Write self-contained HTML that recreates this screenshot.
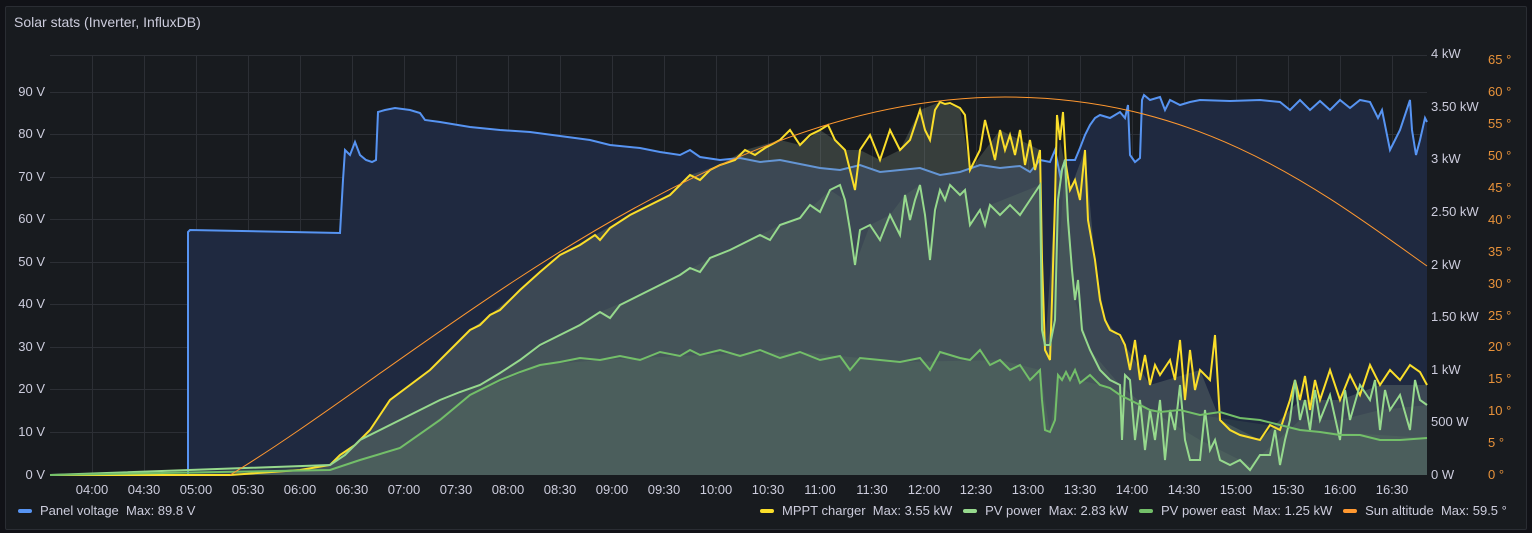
<!DOCTYPE html>
<html><head><meta charset="utf-8"><style>
html,body{margin:0;padding:0;background:#111217;width:1532px;height:533px;overflow:hidden;font-family:"Liberation Sans",sans-serif;}
.panel{position:absolute;left:5px;top:6px;width:1520px;height:522px;background:#181b1f;border:1px solid #2a2d33;border-radius:2px;}
.t{position:absolute;font-size:13px;color:#ccccdc;white-space:nowrap;}
.l{position:absolute;font-size:13px;color:#ccccdc;white-space:nowrap;right:1487px;text-align:right;}
.x{position:absolute;font-size:13px;color:#ccccdc;white-space:nowrap;width:60px;text-align:center;margin-left:-30px;}
.o{color:#e8923a;}
.title{position:absolute;left:14px;top:14px;font-size:14px;color:#ccccdc;}
.sw{display:inline-block;width:14px;height:4px;border-radius:2px;vertical-align:middle;margin-right:8px;position:relative;top:-1px}
</style></head><body>
<div class="panel"></div>
<div class="title">Solar stats (Inverter, InfluxDB)</div>
<svg width="1532" height="533" style="position:absolute;left:0;top:0">
<g stroke="#2c2f35" stroke-width="1">
<line x1="50" y1="55.5" x2="1427" y2="55.5"/>
<line x1="50" y1="92.5" x2="1427" y2="92.5"/><line x1="50" y1="134.5" x2="1427" y2="134.5"/><line x1="50" y1="177.5" x2="1427" y2="177.5"/><line x1="50" y1="219.5" x2="1427" y2="219.5"/><line x1="50" y1="262.5" x2="1427" y2="262.5"/><line x1="50" y1="304.5" x2="1427" y2="304.5"/><line x1="50" y1="347.5" x2="1427" y2="347.5"/><line x1="50" y1="389.5" x2="1427" y2="389.5"/><line x1="50" y1="432.5" x2="1427" y2="432.5"/>
<line x1="92.5" y1="55" x2="92.5" y2="475"/><line x1="144.5" y1="55" x2="144.5" y2="475"/><line x1="196.5" y1="55" x2="196.5" y2="475"/><line x1="248.5" y1="55" x2="248.5" y2="475"/><line x1="300.5" y1="55" x2="300.5" y2="475"/><line x1="352.5" y1="55" x2="352.5" y2="475"/><line x1="404.5" y1="55" x2="404.5" y2="475"/><line x1="456.5" y1="55" x2="456.5" y2="475"/><line x1="508.5" y1="55" x2="508.5" y2="475"/><line x1="560.5" y1="55" x2="560.5" y2="475"/><line x1="612.5" y1="55" x2="612.5" y2="475"/><line x1="664.5" y1="55" x2="664.5" y2="475"/><line x1="716.5" y1="55" x2="716.5" y2="475"/><line x1="768.5" y1="55" x2="768.5" y2="475"/><line x1="820.5" y1="55" x2="820.5" y2="475"/><line x1="872.5" y1="55" x2="872.5" y2="475"/><line x1="924.5" y1="55" x2="924.5" y2="475"/><line x1="976.5" y1="55" x2="976.5" y2="475"/><line x1="1028.5" y1="55" x2="1028.5" y2="475"/><line x1="1080.5" y1="55" x2="1080.5" y2="475"/><line x1="1132.5" y1="55" x2="1132.5" y2="475"/><line x1="1184.5" y1="55" x2="1184.5" y2="475"/><line x1="1236.5" y1="55" x2="1236.5" y2="475"/><line x1="1288.5" y1="55" x2="1288.5" y2="475"/><line x1="1340.5" y1="55" x2="1340.5" y2="475"/><line x1="1392.5" y1="55" x2="1392.5" y2="475"/>
</g>
<!-- blue -->
<path d="M50,475 L188,475 L188,232 L190,230 L340,233 L343,180 L345,150 L350,155 L355,142 L360,155 L366,160 L372,162 L376,160 L378,112 L385,110 L395,108 L410,110 L420,113 L425,120 L440,122 L470,127 L500,130 L530,132 L560,136 L590,140 L610,145 L640,148 L660,152 L680,155 L690,150 L700,157 L720,160 L740,158 L760,162 L780,160 L800,164 L820,168 L840,170 L860,165 L880,172 L900,170 L920,168 L940,175 L960,172 L980,165 L1000,168 L1020,166 L1030,172 L1040,160 L1050,162 L1055,150 L1060,175 L1065,160 L1075,160 L1080,148 L1085,135 L1090,125 L1095,118 L1100,115 L1110,118 L1120,112 L1125,118 L1128,105 L1130,155 L1135,162 L1140,158 L1142,100 L1144,95 L1150,100 L1160,97 L1165,110 L1170,100 L1180,105 L1190,102 L1200,100 L1230,101 L1260,100 L1280,102 L1290,110 L1300,100 L1310,110 L1320,101 L1330,110 L1340,100 L1350,108 L1360,100 L1370,102 L1378,118 L1382,110 L1390,150 L1395,140 L1400,130 L1410,100 L1412,130 L1416,155 L1420,140 L1425,118 L1427,122 L1427,475 Z" fill="#1f2940" stroke="none"/>
<path d="M50,475 L188,475 L188,232 L190,230 L340,233 L343,180 L345,150 L350,155 L355,142 L360,155 L366,160 L372,162 L376,160 L378,112 L385,110 L395,108 L410,110 L420,113 L425,120 L440,122 L470,127 L500,130 L530,132 L560,136 L590,140 L610,145 L640,148 L660,152 L680,155 L690,150 L700,157 L720,160 L740,158 L760,162 L780,160 L800,164 L820,168 L840,170 L860,165 L880,172 L900,170 L920,168 L940,175 L960,172 L980,165 L1000,168 L1020,166 L1030,172 L1040,160 L1050,162 L1055,150 L1060,175 L1065,160 L1075,160 L1080,148 L1085,135 L1090,125 L1095,118 L1100,115 L1110,118 L1120,112 L1125,118 L1128,105 L1130,155 L1135,162 L1140,158 L1142,100 L1144,95 L1150,100 L1160,97 L1165,110 L1170,100 L1180,105 L1190,102 L1200,100 L1230,101 L1260,100 L1280,102 L1290,110 L1300,100 L1310,110 L1320,101 L1330,110 L1340,100 L1350,108 L1360,100 L1370,102 L1378,118 L1382,110 L1390,150 L1395,140 L1400,130 L1410,100 L1412,130 L1416,155 L1420,140 L1425,118 L1427,122" fill="none" stroke="#5794f2" stroke-width="2"/>
<!-- yellow fill -->
<path d="M50,475 L230,475 L300,470 L330,465 L340,455 L355,445 L370,430 L390,400 L410,385 L430,370 L450,350 L470,330 L490,315 L520,290 L540,272 L560,255 L595,235 L630,215 L670,195 L690,175 L720,165 L745,150 L780,140 L800,145 L820,130 L835,140 L845,150 L860,150 L880,160 L900,150 L920,110 L940,102 L960,108 L970,170 L1000,130 L1040,150 L1045,350 L1055,200 L1060,140 L1070,190 L1085,150 L1095,260 L1105,320 L1125,345 L1150,385 L1200,370 L1220,420 L1260,440 L1300,400 L1340,400 L1380,385 L1427,385 L1427,475 Z" fill="#8a9b8a" fill-opacity="0.28"/>
<!-- pv power fill -->
<path d="M50,475 L330,465 L360,440 L400,420 L440,400 L480,385 L520,360 L560,335 L600,312 L640,295 L680,275 L710,258 L750,240 L780,225 L800,218 L830,190 L845,200 L855,265 L870,225 L890,215 L905,195 L920,185 L930,260 L940,190 L965,190 L970,225 L990,205 L1040,185 L1045,345 L1055,320 L1065,160 L1075,300 L1090,350 L1120,385 L1150,410 L1200,440 L1250,465 L1300,420 L1340,420 L1380,410 L1427,405 L1427,475 Z" fill="#7a9a7a" fill-opacity="0.15"/>
<!-- east fill -->
<path d="M50,475 L330,470 L400,448 L470,395 L540,365 L600,360 L700,355 L800,352 L900,362 L1000,360 L1040,370 L1050,432 L1058,375 L1100,385 L1150,410 L1200,415 L1300,430 L1427,438 L1427,475 Z" fill="#7ab070" fill-opacity="0.12"/>
<!-- yellow stroke -->
<path d="M50,475 L230,475 L300,470 L330,465 L340,455 L355,445 L370,430 L390,400 L410,385 L430,370 L450,350 L470,330 L480,325 L490,315 L500,310 L520,290 L540,272 L560,255 L580,245 L595,235 L600,240 L610,228 L630,215 L650,205 L670,195 L685,180 L690,175 L700,180 L710,170 L720,165 L735,160 L745,150 L755,155 L765,148 L780,140 L790,130 L800,145 L810,135 L820,130 L828,125 L835,140 L845,150 L855,190 L860,150 L870,135 L880,160 L890,130 L900,150 L910,140 L920,110 L925,130 L930,140 L935,110 L940,102 L945,104 L950,103 L960,108 L965,115 L970,170 L980,150 L985,120 L990,140 L995,160 L1000,130 L1005,150 L1010,135 L1015,155 L1020,130 L1025,165 L1030,140 L1035,170 L1040,150 L1042,260 L1045,350 L1050,360 L1052,300 L1055,200 L1057,115 L1060,140 L1063,112 L1066,165 L1070,190 L1075,180 L1080,200 L1085,150 L1088,220 L1095,260 L1100,300 L1105,320 L1110,330 L1120,335 L1125,345 L1130,370 L1135,340 L1140,380 L1145,355 L1150,385 L1155,365 L1160,375 L1170,360 L1175,380 L1180,340 L1185,400 L1190,350 L1195,390 L1200,370 L1210,380 L1215,335 L1220,420 L1230,430 L1240,435 L1260,440 L1270,425 L1280,430 L1290,400 L1295,380 L1300,400 L1305,376 L1310,410 L1315,380 L1320,400 L1330,370 L1340,400 L1350,375 L1360,395 L1370,365 L1380,385 L1390,370 L1400,380 L1410,365 L1420,372 L1427,385" fill="none" stroke="#fade2a" stroke-width="2"/>
<!-- pv power stroke -->
<path d="M50,475 L330,465 L345,455 L360,440 L380,430 L400,420 L420,410 L440,400 L460,392 L480,385 L500,373 L520,360 L540,345 L560,335 L580,325 L600,312 L610,318 L620,305 L640,295 L660,285 L680,275 L690,268 L700,272 L710,258 L730,250 L750,240 L760,235 L770,240 L780,225 L800,218 L810,205 L820,212 L830,190 L840,185 L845,200 L850,230 L855,265 L860,230 L870,225 L880,240 L890,215 L900,235 L905,195 L910,220 L915,200 L920,185 L925,215 L930,260 L935,210 L940,190 L945,200 L950,185 L960,195 L965,190 L970,225 L980,210 L985,225 L990,205 L1000,215 L1010,205 L1020,215 L1030,200 L1040,185 L1042,330 L1045,345 L1050,345 L1055,320 L1058,200 L1062,170 L1065,160 L1068,220 L1072,270 L1075,300 L1078,280 L1082,330 L1090,350 L1100,370 L1110,380 L1120,385 L1122,440 L1125,375 L1130,380 L1135,440 L1140,400 L1145,450 L1150,410 L1155,440 L1160,400 L1165,460 L1170,410 L1175,430 L1180,385 L1185,440 L1190,460 L1200,460 L1205,410 L1210,450 L1215,440 L1220,460 L1230,465 L1240,460 L1250,470 L1260,455 L1270,455 L1275,430 L1280,465 L1285,440 L1290,420 L1295,380 L1300,420 L1305,400 L1310,430 L1315,390 L1320,420 L1330,395 L1340,440 L1345,390 L1350,420 L1360,385 L1370,400 L1375,380 L1380,430 L1385,390 L1390,410 L1400,395 L1410,430 L1415,380 L1420,400 L1427,405" fill="none" stroke="#96d98d" stroke-width="2"/>
<!-- pv east stroke -->
<path d="M50,475 L330,470 L360,460 L400,448 L440,420 L470,395 L500,380 L520,372 L540,365 L560,362 L580,358 L600,360 L620,356 L640,360 L660,352 L680,356 L690,350 L700,355 L720,350 L740,356 L760,350 L780,358 L800,352 L820,360 L840,356 L850,370 L860,358 L880,360 L900,362 L920,358 L930,370 L940,352 L960,358 L970,360 L980,350 L990,365 L1000,360 L1010,370 L1020,365 L1030,380 L1040,370 L1042,400 L1045,430 L1050,432 L1055,420 L1058,375 L1062,380 L1066,372 L1070,380 L1075,370 L1080,383 L1090,375 L1100,385 L1110,388 L1120,395 L1130,400 L1140,405 L1150,410 L1160,412 L1180,410 L1200,415 L1220,412 L1240,418 L1260,420 L1280,425 L1300,430 L1320,432 L1340,435 L1360,435 L1380,440 L1400,440 L1427,438" fill="none" stroke="#73bf69" stroke-width="2"/>
<!-- sun -->
<path d="M230,475 C420,360 700,97 1005,97 C1200,97 1320,190 1427,266" fill="none" stroke="#ff9830" stroke-width="1"/>
</svg>
<div class="l" style="top:84px">90 V</div>
<div class="l" style="top:126px">80 V</div>
<div class="l" style="top:169px">70 V</div>
<div class="l" style="top:211px">60 V</div>
<div class="l" style="top:254px">50 V</div>
<div class="l" style="top:296px">40 V</div>
<div class="l" style="top:339px">30 V</div>
<div class="l" style="top:381px">20 V</div>
<div class="l" style="top:424px">10 V</div>
<div class="l" style="top:467px">0 V</div>
<div class="t" style="left:1431px;top:46px">4 kW</div>
<div class="t" style="left:1431px;top:99px">3.50 kW</div>
<div class="t" style="left:1431px;top:151px">3 kW</div>
<div class="t" style="left:1431px;top:204px">2.50 kW</div>
<div class="t" style="left:1431px;top:257px">2 kW</div>
<div class="t" style="left:1431px;top:309px">1.50 kW</div>
<div class="t" style="left:1431px;top:362px">1 kW</div>
<div class="t" style="left:1431px;top:414px">500 W</div>
<div class="t" style="left:1431px;top:467px">0 W</div>
<div class="t o" style="left:1488px;top:52px">65 °</div>
<div class="t o" style="left:1488px;top:84px">60 °</div>
<div class="t o" style="left:1488px;top:116px">55 °</div>
<div class="t o" style="left:1488px;top:148px">50 °</div>
<div class="t o" style="left:1488px;top:180px">45 °</div>
<div class="t o" style="left:1488px;top:212px">40 °</div>
<div class="t o" style="left:1488px;top:244px">35 °</div>
<div class="t o" style="left:1488px;top:276px">30 °</div>
<div class="t o" style="left:1488px;top:308px">25 °</div>
<div class="t o" style="left:1488px;top:339px">20 °</div>
<div class="t o" style="left:1488px;top:371px">15 °</div>
<div class="t o" style="left:1488px;top:403px">10 °</div>
<div class="t o" style="left:1488px;top:435px">5 °</div>
<div class="t o" style="left:1488px;top:467px">0 °</div>
<div style="position:absolute;left:0;top:482px;width:1532px">
<div class="x" style="left:92px">04:00</div><div class="x" style="left:144px">04:30</div><div class="x" style="left:196px">05:00</div><div class="x" style="left:248px">05:30</div><div class="x" style="left:300px">06:00</div><div class="x" style="left:352px">06:30</div><div class="x" style="left:404px">07:00</div><div class="x" style="left:456px">07:30</div><div class="x" style="left:508px">08:00</div><div class="x" style="left:560px">08:30</div><div class="x" style="left:612px">09:00</div><div class="x" style="left:664px">09:30</div><div class="x" style="left:716px">10:00</div><div class="x" style="left:768px">10:30</div><div class="x" style="left:820px">11:00</div><div class="x" style="left:872px">11:30</div><div class="x" style="left:924px">12:00</div><div class="x" style="left:976px">12:30</div><div class="x" style="left:1028px">13:00</div><div class="x" style="left:1080px">13:30</div><div class="x" style="left:1132px">14:00</div><div class="x" style="left:1184px">14:30</div><div class="x" style="left:1236px">15:00</div><div class="x" style="left:1288px">15:30</div><div class="x" style="left:1340px">16:00</div><div class="x" style="left:1392px">16:30</div>
</div>
<div class="t" style="left:18px;top:503px"><span class="sw" style="background:#5794f2"></span>Panel voltage&nbsp;&nbsp;Max: 89.8 V</div>
<div class="t" style="left:760px;top:503px"><span class="sw" style="background:#fade2a"></span>MPPT charger&nbsp;&nbsp;Max: 3.55 kW&nbsp;&nbsp;&nbsp;<span class="sw" style="background:#96d98d"></span>PV power&nbsp;&nbsp;Max: 2.83 kW&nbsp;&nbsp;&nbsp;<span class="sw" style="background:#73bf69"></span>PV power east&nbsp;&nbsp;Max: 1.25 kW&nbsp;&nbsp;&nbsp;<span class="sw" style="background:#ff9830"></span>Sun altitude&nbsp;&nbsp;Max: 59.5 °</div>
</body></html>
